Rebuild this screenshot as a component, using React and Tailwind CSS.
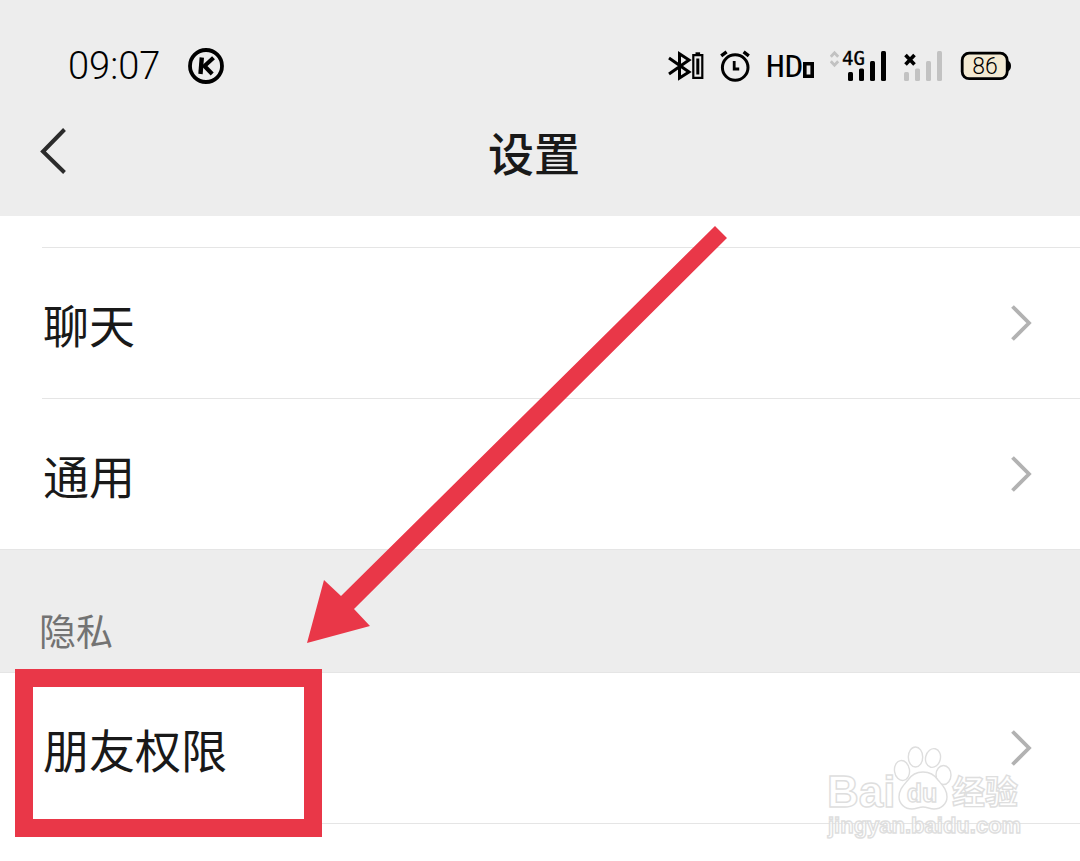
function BluetoothIcon() {
  return (
    <svg width="36" height="32" viewBox="0 0 36 32" fill="none" stroke="black" strokeWidth="3" aria-hidden="true">
      <path d="M1 8 21 22 11.5 28V3.8L21 10 1 24" />
      <path d="M25.3 5.2h9v22.6h-9z" strokeWidth="2.2" />
      <path d="M27.5 3.5h4.6" strokeWidth="2.4" />
      <path d="M29.8 8.5v16" strokeWidth="3" />
    </svg>
  )
}

function AlarmIcon() {
  return (
    <svg width="30" height="32" viewBox="0 0 30 32" fill="none" stroke="black" strokeWidth="3" aria-hidden="true">
      <circle cx="15.2" cy="17.5" r="12.8" />
      <path d="M14.2 11v8h5" strokeWidth="2.8" />
      <path d="M1.2 5.8 6.6 1.8M23.6 1.8l5.2 4" strokeWidth="3.4" />
    </svg>
  )
}

function SignalIcon() {
  return (
    <svg width="58" height="36" viewBox="0 -2 58 36" aria-hidden="true">
      <g fill="none" stroke="#c2c2c2" strokeWidth="2.8">
        <path d="m.8 6.8 3.7-4 3.7 4M.8 11.2l3.7 4 3.7-4" />
      </g>
      <text x="12" y="15" fontSize="19" stroke="black" strokeWidth="0.4" className="font-['DejaVu_Sans_Mono',monospace]">4G</text>
      <rect x="18" y="22" width="5" height="9" rx="1.5" />
      <rect x="29" y="18.5" width="5" height="12.5" rx="1.5" />
      <rect x="40" y="11" width="5" height="20" rx="1.5" />
      <rect x="51" y="1" width="5" height="30" rx="1.5" />
    </svg>
  )
}

function NoSignalIcon() {
  return (
    <svg width="40" height="32" viewBox="0 0 40 32" aria-hidden="true">
      <path d="m1.5 5 9 9.5m0-9.5-9 9.5" stroke="black" strokeWidth="3.6" />
      <g fill="#c2c2c2">
        <rect x="0" y="22" width="5" height="9" rx="1.5" />
        <rect x="11" y="18.5" width="5" height="12.5" rx="1.5" />
        <rect x="22" y="11" width="5" height="20" rx="1.5" />
        <rect x="33" y="1" width="5" height="30" rx="1.5" />
      </g>
    </svg>
  )
}

function BatteryIcon() {
  return (
    <svg width="52" height="32" viewBox="0 0 52 32" aria-hidden="true">
      <rect x="2.2" y="3.2" width="45" height="25.5" rx="7" fill="#f3ead3" stroke="black" strokeWidth="2.8" />
      <path d="M48 10.5c2 1 3 3 3 5.5s-1 4.500-3 5.5z" />
      <text x="25" y="24" fontSize="23" textAnchor="middle" className="font-[Roboto,sans-serif] font-light">86</text>
    </svg>
  )
}

function StatusBar() {
  return (
    <div className="flex h-24 items-end justify-between px-[68px]">
      <div className="flex h-[60px] items-center gap-7">
        <time className="font-[Roboto,sans-serif] text-[38px] leading-10 font-light">09:07</time>
        <svg width="36" height="36" viewBox="0 0 36 36" fill="none" stroke="black" aria-hidden="true">
          <circle cx="18" cy="18" r="16" strokeWidth="3.8" />
          <path d="M13.800 9.500 12.500 26" strokeWidth="4.4" />
          <path d="M25.500 9.800 16.500 18l7.700 8" strokeWidth="4.2" />
        </svg>
      </div>
      <div className="flex h-[60px] items-center gap-4">
        <BluetoothIcon />
        <AlarmIcon />
        <div className="flex w-12 items-end font-['DejaVu_Sans_Mono',monospace]">
          <span className="text-[31px] leading-8">HD</span>
          <svg width="11" height="22" viewBox="0 0 11 22" fill="none" stroke="black" strokeWidth="3.6" className="shrink-0" aria-hidden="true">
            <path d="M1.8 3.8h7.4v12.4H1.8z" />
          </svg>
        </div>
        <SignalIcon />
        <NoSignalIcon />
        <BatteryIcon />
      </div>
    </div>
  )
}

function TitleBar() {
  return (
    <div className="grid h-[120px] grid-cols-[96px_1fr_108px] items-start pt-6">
      <button type="button" aria-label="返回" className="flex h-16 items-center pl-10">
        <svg width="28" height="48" viewBox="0 0 28 48" fill="none" stroke="#2b2b2b" strokeWidth="4" aria-hidden="true">
          <path d="M24.5 1.5 3 23.5l21.5 21" />
        </svg>
      </button>
      <h1 className="text-center text-[46px] leading-[62px] font-medium text-[#191919]">设置</h1>
    </div>
  )
}

function Row({ label, children }) {
  return (
    <li className="relative pl-[42px]">
      <a href="#" className="flex h-[151px] items-center justify-between border-b border-[#e5e5e5] pl-px pr-12 text-[46px]">
        <span>{label}</span>
        <svg width="22" height="36" viewBox="0 0 22 36" fill="none" stroke="#b2b2b2" strokeWidth="3.8" aria-hidden="true">
          <path d="M2.5 1.5 19 18 2.5 34.5" />
        </svg>
      </a>
      {children}
    </li>
  )
}

function Watermark() {
  return (
    <svg
      width="200"
      height="100"
      viewBox="0 0 200 100"
      fill="white"
      stroke="#dedede"
      strokeWidth="1.4"
      className="pointer-events-none absolute right-[55px] top-[70px] font-['Liberation_Sans','Noto_Sans_CJK_SC',sans-serif] font-bold"
    >
      <text x="2" y="64" fontSize="44">Bai</text>
      <ellipse cx="77" cy="27.5" rx="7.5" ry="10" transform="rotate(-8 77 27.5)" />
      <ellipse cx="90.5" cy="14" rx="7.2" ry="10" />
      <ellipse cx="108" cy="15" rx="7.4" ry="9.5" transform="rotate(14 108 15)" />
      <ellipse cx="118.5" cy="32" rx="7.5" ry="9.5" />
      <path d="M98 29c7 0 11 2 15 8 4 5 9 9 9 17 0 7-6 12-13 12-4 0-7-2-11-2s-7 2-11 2c-7 0-13-5-13-12 0-8 5-12 9-17 4-6 8-8 15-8z" />
      <text x="97" y="59" fontSize="25" textAnchor="middle">du</text>
      <text x="127" y="61" fontSize="33" className="font-['Noto_Sans_CJK_SC',sans-serif]">经验</text>
      <text x="3" y="90" fontSize="22" fillOpacity="0.6">jingyan.baidu.com</text>
    </svg>
  )
}

export default function App() {
  return (
    <div className="relative min-h-screen overflow-hidden bg-white font-['Noto_Sans_CJK_SC',sans-serif] text-[#191919]">
      <header className="bg-[#ededed] text-black">
        <StatusBar />
        <TitleBar />
      </header>

      <main>
        <div className="ml-[42px] h-8 border-b border-[#e5e5e5]" />
        <ul>
          <Row label="聊天" />
          <Row label="通用" />
        </ul>

        <h2 className="-mt-px h-[124px] border-y border-[#e5e5e5] bg-[#ededed] pl-[39px] pt-13 text-[37px] leading-[56px] text-[#737373]">
          隐私
        </h2>

        <ul>
          <Row label="朋友权限">
            <div className="pointer-events-none absolute -top-1 left-[15px] h-[168px] w-[307px] border-[18px] border-[#e93748]" />
            <Watermark />
          </Row>
        </ul>
      </main>

      <svg
        width="424"
        height="420"
        viewBox="305 225 424 420"
        className="pointer-events-none absolute left-[305px] top-[225px]"
        aria-hidden="true"
      >
        <path d="M307 643 324 580l17 16L715 226l12 12-373 371 16 17z" fill="#e93748" />
      </svg>
    </div>
  )
}
